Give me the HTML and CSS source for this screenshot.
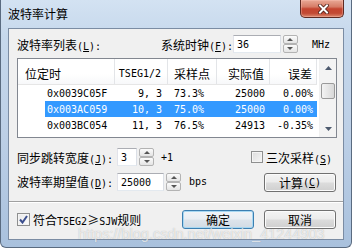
FILE: index.html
```html
<!DOCTYPE html>
<html>
<head>
<meta charset="utf-8">
<link rel="stylesheet" href="styles.css">
</head>
<body>
<div class="window">
  <div class="titlebar">
    <span class="title">波特率计算</span>
    <div class="close">
      <svg width="11" height="10" viewBox="0 0 11 10"><path d="M2 1.5 L9 8.5 M9 1.5 L2 8.5" stroke="#4a1a12" stroke-width="3.6" stroke-linecap="square"/><path d="M2 1.5 L9 8.5 M9 1.5 L2 8.5" stroke="#fff" stroke-width="2" stroke-linecap="square"/></svg>
    </div>
  </div>
  <div class="client">
    <div class="row row1">
      <span class="lbl">波特率列表<span class="m">(<u>L</u>):</span></span>
      <div class="clock">
        <span class="lbl">系统时钟<span class="m">(<u>F</u>):</span></span>
        <div class="edit w48"><span class="m">36</span></div>
        <div class="spin"><div class="sb up"><i></i></div><div class="sb dn"><i></i></div></div>
        <span class="m unit-mhz">MHz</span>
      </div>
    </div>

    <div class="list">
      <div class="lv">
        <div class="grid hdr">
          <div class="c1">位定时</div>
          <div class="c2 m">TSEG1/2</div>
          <div class="c3">采样点</div>
          <div class="c4">实际值</div>
          <div class="c5">误差</div>
        </div>
        <div class="grid item">
          <div class="c1 m">0x0039C05F</div>
          <div class="c2 m">9, 3</div>
          <div class="c3 m">73.3%</div>
          <div class="c4 m">25000</div>
          <div class="c5 m">0.00%</div>
        </div>
        <div class="grid item sel">
          <div class="c1 m">0x003AC059</div>
          <div class="c2 m">10, 3</div>
          <div class="c3 m">75.0%</div>
          <div class="c4 m">25000</div>
          <div class="c5 m">0.00%</div>
        </div>
        <div class="grid item">
          <div class="c1 m">0x003BC054</div>
          <div class="c2 m">11, 3</div>
          <div class="c3 m">76.5%</div>
          <div class="c4 m">24913</div>
          <div class="c5 m">-0.35%</div>
        </div>
      </div>
      <div class="vscroll">
        <div class="arrow"><svg width="7" height="4" viewBox="0 0 7 4"><path d="M0 4 L3.5 0 L7 4 Z" fill="#4d5a6e"/></svg></div>
        <div class="track"><div class="thumb"></div></div>
        <div class="arrow"><svg width="7" height="4" viewBox="0 0 7 4"><path d="M0 0 L3.5 4 L7 0 Z" fill="#4d5a6e"/></svg></div>
      </div>
    </div>

    <div class="row r2">
      <span class="lbl w100">同步跳转宽度<span class="m">(<u>J</u>):</span></span>
      <div class="edit w20"><span class="m">3</span></div>
      <div class="spin"><div class="sb up"><i></i></div><div class="sb dn"><i></i></div></div>
      <span class="m plus">+1</span>
      <label class="chk-group">
        <span class="cb"></span>
        <span>三次采样<span class="m">(<u>S</u>)</span></span>
      </label>
    </div>

    <div class="row r3">
      <span class="lbl w100">波特率期望值<span class="m">(<u>D</u>):</span></span>
      <div class="edit w46"><span class="m">25000</span></div>
      <div class="spin"><div class="sb up"><i></i></div><div class="sb dn"><i></i></div></div>
      <span class="m bps">bps</span>
      <div class="btn push-right">计算<span class="m">(<u>C</u>)</span></div>
    </div>

    <div class="sep"></div>

    <div class="row r4">
      <label class="chk-group first">
        <span class="cb checked"><svg width="9" height="9" viewBox="0 0 9 9"><path d="M1 4.5 L3.5 7.5 L8 1" stroke="#3c4f8e" stroke-width="2" fill="none"/></svg></span>
        <span>符合<span class="m">TSEG2</span>≥<span class="m">SJW</span>规则</span>
      </label>
      <div class="btn focus push-right">确定</div>
      <div class="btn gap10">取消</div>
    </div>
  </div>
  <div class="watermark">https://blog.csdn.net/weixin_41244903</div>
</div>
</body>
</html>
```

FILE: styles.css
```css
* { box-sizing: border-box; }
html, body { margin: 0; padding: 0; }
body {
  width: 353px;
  height: 249px;
  overflow: hidden;
  background: #fff;
  font-family: "Noto Sans CJK SC", sans-serif;
  font-size: 12px;
  color: #000;
}
.m {
  font-family: "DejaVu Sans Mono", monospace;
  font-size: 10px;
}
u { text-decoration: underline; text-underline-offset: 1px; }

.window {
  position: relative;
  width: 352px;
  height: 248px;
  display: flex;
  flex-direction: column;
  padding: 0 7px 7px 7px;
  background: linear-gradient(180deg, #d3e2f2 0%, #c6d8ec 15%, #bccfe6 55%, #a9c1dd 100%);
  border: 1px solid #5a6b80;
  border-top: none;
  border-radius: 0 0 6px 6px;
}
.titlebar {
  height: 28px;
  display: flex;
  align-items: flex-start;
  flex: none;
}
.title {
  margin-top: 5px;
  line-height: 17px;
  color: #000;
}
.close {
  margin-left: auto;
  width: 44px;
  height: 18px;
  border: 1px solid #5e2a22;
  border-top: none;
  border-radius: 0 0 5px 5px;
  background: linear-gradient(180deg, #e9a996 0%, #d67c67 40%, #c4442f 52%, #c24a34 78%, #dc8a70 100%);
  display: flex;
  align-items: center;
  justify-content: center;
  box-shadow: inset 0 0 0 1px rgba(255, 200, 190, 0.35);
}
.close svg { margin-left: 3px; }

.client {
  flex: 1;
  background: #f0f0f0;
  border: 1px solid #7b8ca3;
  padding: 0 7px 0 8px;
  display: flex;
  flex-direction: column;
}
.row { display: flex; align-items: center; }
.row1 { margin-top: 6px; height: 18px; }
.lbl { white-space: nowrap; }
.w100 { width: 100px; flex: none; }
.clock { margin-left: auto; display: flex; align-items: center; margin-right: 6px; }
.clock .lbl { width: 72px; }
.unit-mhz { margin-left: 14px; }

.edit {
  height: 18px;
  background: #fff;
  border: 1px solid;
  border-color: #abadb3 #dbdfe6 #e3e9ef #e2e3ea;
  padding-left: 3px;
  display: flex;
  align-items: center;
  flex: none;
}
.w48 { width: 48px; }
.w20 { width: 20px; }
.w46 { width: 47px; }
.spin {
  width: 15px;
  height: 18px;
  margin-left: 2px;
  display: flex;
  flex-direction: column;
  flex: none;
}
.sb {
  flex: 1;
  border: 1px solid #b3b3b3;
  border-radius: 2px;
  background: linear-gradient(180deg, #fbfbfb, #e4e4e4);
  display: flex;
  align-items: center;
  justify-content: center;
}
.sb i { width: 0; height: 0; border-left: 3px solid transparent; border-right: 3px solid transparent; }
.sb.up i { border-bottom: 3px solid #555; }
.sb.dn i { border-top: 3px solid #555; }

.list {
  margin-top: 5px;
  width: 320px;
  height: 80px;
  border: 1px solid #828790;
  background: #fff;
  display: flex;
  flex: none;
}
.lv { flex: 1; overflow: hidden; }
.grid {
  display: grid;
  grid-template-columns: 97px 53px 49px 53px 47px;
  width: 299px;
}
.hdr {
  height: 26px;
  border-bottom: 1px solid #e6e6e6;
  background: linear-gradient(180deg, #ffffff 0%, #ffffff 60%, #f7f8fa 100%);
}
.hdr > div {
  border-right: 1px solid #e3e5e8;
  display: flex;
  align-items: center;
  padding-top: 4px;
  white-space: nowrap;
}
.hdr .c1 { padding-left: 7px; }
.hdr .c2 { justify-content: flex-end; padding-right: 6px; }
.hdr .c3 { padding-left: 6px; }
.hdr .c4 { justify-content: flex-end; padding-right: 5px; }
.hdr .c5 { justify-content: flex-end; padding-right: 4px; }
.item { height: 16px; }
.item > div { display: flex; align-items: center; white-space: nowrap; }
.item .c1 { padding-left: 29px; }
.item .c2 { justify-content: flex-end; padding-right: 6px; }
.item .c3 { padding-left: 6px; }
.item .c4 { justify-content: flex-end; padding-right: 5px; }
.item .c5 { justify-content: flex-end; padding-right: 4px; }
.item.sel {
  background: linear-gradient(90deg, transparent 27px, #3399ff 27px);
  color: #fff;
}

.vscroll {
  width: 17px;
  flex: none;
  background: #f3f3f3;
  display: flex;
  flex-direction: column;
  border-left: 1px solid #f0f0f0;
}
.vscroll .arrow {
  height: 17px;
  display: flex;
  align-items: center;
  justify-content: center;
  flex: none;
}
.vscroll .track { flex: 1; padding-top: 7px; }
.thumb {
  margin: 0 1px;
  height: 16px;
  border: 1px solid #9a9a9a;
  border-radius: 2px;
  background: linear-gradient(90deg, #f3f3f3, #e6e6e6 50%, #d8d8d8);
}

.r2 { margin-top: 10px; height: 18px; }
.plus { margin-left: 7px; }
.chk-group { display: flex; align-items: center; white-space: nowrap; }
.r2 .chk-group { margin-left: auto; margin-right: 4px; }
.cb {
  width: 12px;
  height: 12px;
  border: 1px solid #8e8f8f;
  background: linear-gradient(135deg, #dcdcdc, #f6f6f6);
  box-shadow: inset 0 0 0 1px #f4f4f4;
  margin-right: 3px;
  display: flex;
  align-items: center;
  justify-content: center;
  flex: none;
}
.cb.checked { width: 13px; height: 13px; background: linear-gradient(135deg, #e8e8e8, #fdfdfd); }

.r3 { margin-top: 7px; height: 19px; align-items: flex-start; }
.r3 > .lbl { line-height: 18px; }
.bps { margin-left: 8px; line-height: 18px; }
.push-right { margin-left: auto; }
.btn {
  width: 72px;
  height: 19px;
  border: 1px solid #707070;
  border-radius: 3px;
  background: linear-gradient(180deg, #f4f4f4 0%, #ebebeb 48%, #dcdcdc 52%, #cfcfcf 100%);
  box-shadow: inset 0 0 0 1px #fbfbfb;
  display: flex;
  align-items: center;
  justify-content: center;
  white-space: nowrap;
  flex: none;
}
.btn.focus {
  border-color: #3c7fb1;
  box-shadow: inset 0 0 0 1px #a8d8f2;
  background: linear-gradient(180deg, #f1f4f7 0%, #e9eef3 48%, #dde4eb 52%, #d2dbe4 100%);
}
.gap10 { margin-left: 10px; }

.sep {
  margin: 9px -7px 0 -8px;
  height: 2px;
  border-top: 1px solid #a0a0a0;
  border-bottom: 1px solid #ffffff;
  flex: none;
}
.r4 { margin-top: 7px; height: 19px; }

.watermark {
  position: absolute;
  left: 77px;
  top: 226px;
  font-family: "Liberation Sans", sans-serif;
  font-size: 14.5px;
  line-height: 17px;
  color: rgba(255, 255, 255, 0.7);
  text-shadow: 0 0 1px rgba(110, 110, 110, 0.5);
  white-space: nowrap;
  pointer-events: none;
}
```
